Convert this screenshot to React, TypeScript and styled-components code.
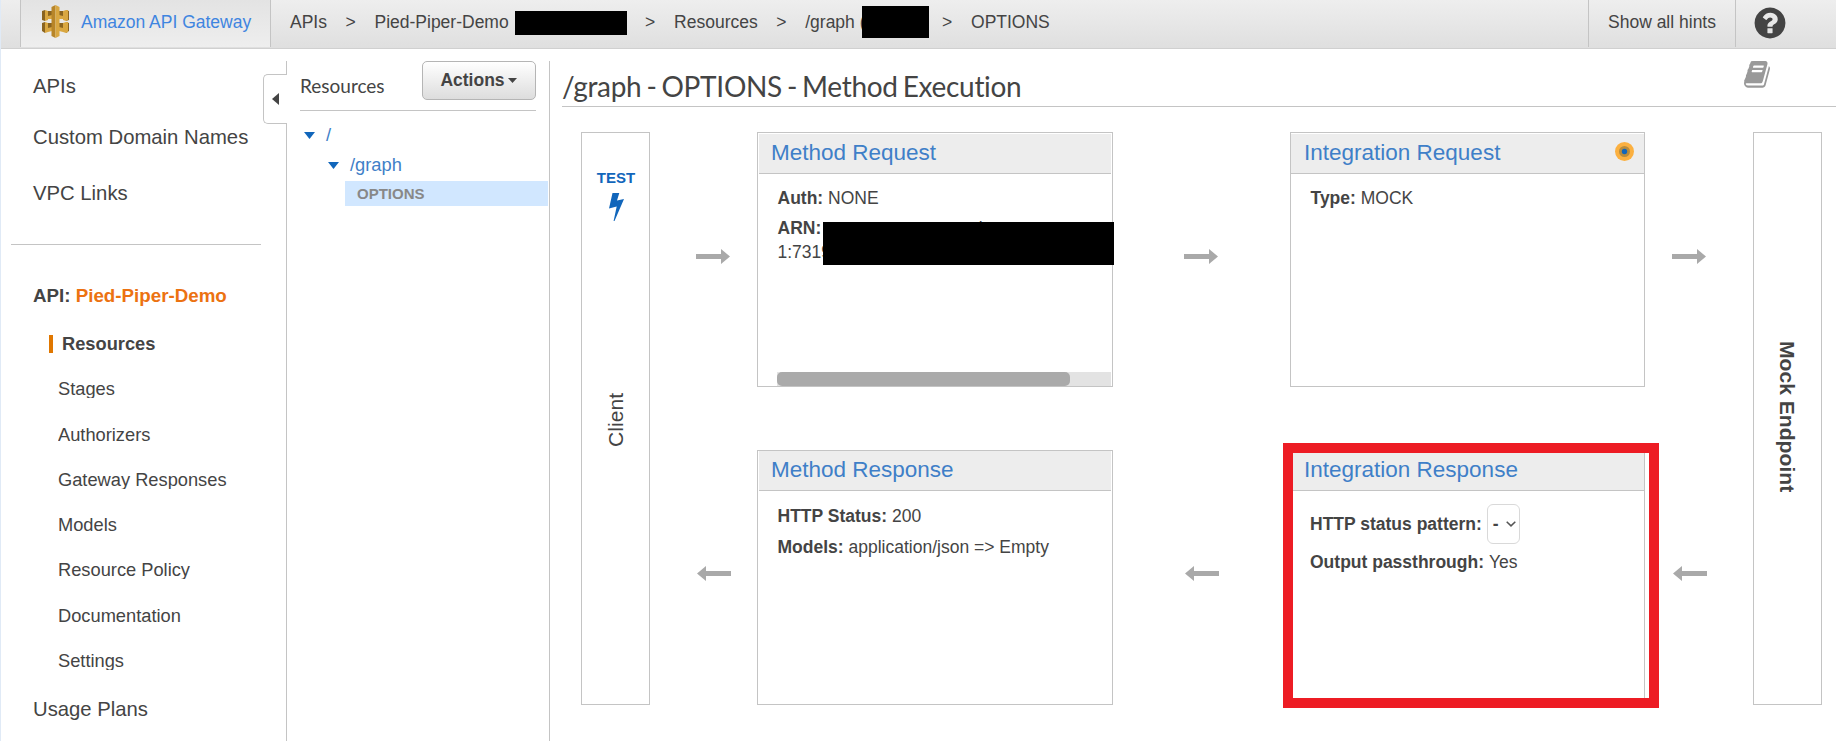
import React from "react";
import styled, { createGlobalStyle } from "styled-components";

const GlobalStyle = createGlobalStyle`
  * { box-sizing: border-box; }
  body {
    margin: 0;
    overflow: hidden;
    background: #fff;
    color: #444;
    font-family: "Liberation Sans", Arial, sans-serif;
    font-size: 17.5px;
  }
`;

const Page = styled.div`
  display: flex;
  flex-direction: column;
  width: 1836px;
  height: 741px;
  overflow: hidden;
  border-left: 1px solid #e0eaf6;
`;

const TopBar = styled.header`
  display: flex;
  flex: none;
  height: 49px;
  padding-left: 19px;
  line-height: 44px;
  background: linear-gradient(#eee, #dfdfdf);
  border-bottom: 1px solid #d0d0d0;
  white-space: pre;
`;

const Brand = styled.a`
  display: flex;
  width: 251px;
  height: 47px;
  padding-left: 21px;
  color: #3f85e0;
  background: linear-gradient(#e3e3e3, #eee);
  border: solid #c4c4c4;
  border-width: 0 1px;
  svg { margin: 5px 12px 0 0; flex: none; }
`;

const Crumbs = styled.nav`
  display: flex;
  flex: 1;
  padding-left: 19px;
`;

const Chevron = styled.span<{ $before?: number }>`
  width: 10px;
  margin: 0 19px 0 ${(p) => p.$before ?? 18.5}px;
`;

const Redaction = styled.span<{ $w: number; $h: number; $top: number; $left: number }>`
  width: ${(p) => p.$w}px;
  height: ${(p) => p.$h}px;
  margin: ${(p) => p.$top}px 0 0 ${(p) => p.$left}px;
  background: #000;
`;

const TopAction = styled.div<{ $w: number; $pad: number }>`
  width: ${(p) => p.$w}px;
  height: 47px;
  padding-left: ${(p) => p.$pad}px;
  border-left: 1px solid #c4c4c4;
  svg { display: block; margin-top: 5px; }
`;

const Main = styled.div`
  display: flex;
  flex: 1;
  min-height: 0;
`;

const Sidebar = styled.aside`
  position: relative;
  flex: none;
  width: 286px;
  height: 680px;
  margin-top: 12px;
  border-right: 1px solid #c4c4c4;
`;

const NavLink = styled.a<{ $top: number }>`
  display: block;
  height: 24px;
  margin: ${(p) => p.$top}px 0 0 32px;
  font-size: 20.3px;
  line-height: 24px;
`;

const Divider = styled.hr`
  width: 250px;
  height: 1px;
  margin: 39px 0 0 10px;
  border: 0;
  background: #c4c4c4;
`;

const ApiTitle = styled.h3`
  height: 22px;
  margin: 40px 0 0 32px;
  font-size: 18.75px;
  line-height: 22px;
  em { color: #ec7211; font-style: normal; }
`;

const SubList = styled.ul`
  display: flex;
  flex-direction: column;
  gap: 27.25px;
  margin: 28px 0 0;
  padding: 0 0 0 57px;
  list-style: none;
`;

const SubItem = styled.li<{ $active?: boolean }>`
  height: 18px;
  overflow: hidden;
  font-size: 18.28px;
  line-height: 17px;
  margin-left: ${(p) => (p.$active ? -9 : 0)}px;
  padding-left: ${(p) => (p.$active ? 9 : 0)}px;
  border-left: ${(p) => (p.$active ? "4px solid #e07700" : "0")};
  font-weight: ${(p) => (p.$active ? 700 : 400)};
`;

const CollapseTab = styled.button`
  position: absolute;
  top: 13px;
  right: -1px;
  width: 24px;
  height: 50px;
  padding: 0 0 0 8px;
  background: #fff;
  border: 1px solid #c4c4c4;
  border-right: 0;
  border-radius: 5px 0 0 5px;
  svg { display: block; }
`;

const ResourcePane = styled.section`
  flex: none;
  width: 263px;
  height: 680px;
  margin-top: 12px;
  padding: 0 1px 0 13px;
  border-right: 1px solid #c4c4c4;
`;

const PaneHeader = styled.div`
  display: flex;
  justify-content: space-between;
  width: 236px;
  height: 50px;
  border-bottom: 1px solid #c4c4c4;
  font-family: Lato, sans-serif;
  font-size: 19px;
  line-height: 50px;
`;

const ActionsButton = styled.button`
  display: flex;
  align-items: center;
  justify-content: center;
  gap: 3px;
  width: 114px;
  height: 39px;
  padding: 0 1px 1px 0;
  color: #444;
  background: linear-gradient(#fff, #ddd);
  border: 1px solid #b5b5b5;
  border-radius: 5px;
  font: bold 17.5px "Liberation Sans", Arial, sans-serif;
`;

const TreeNode = styled.div<{ $level: number; $h: number; $top: number }>`
  display: flex;
  align-items: center;
  gap: 11.5px;
  height: ${(p) => p.$h}px;
  margin-top: ${(p) => p.$top}px;
  padding-left: ${(p) => 3.5 + p.$level * 24}px;
  color: #3f7fc8;
  font-size: 18.3px;
`;

const MethodRow = styled.div`
  height: 25px;
  margin: 6px 0 0 45px;
  padding-left: 12px;
  background: #d1e7ff;
  color: #888;
  font-size: 15px;
  font-weight: 700;
  line-height: 25px;
`;

const Content = styled.main`
  flex: 1;
  margin-left: 12px;
`;

const TitleBar = styled.div`
  display: flex;
  justify-content: space-between;
  height: 58px;
  padding: 0 65px 0 0;
  border-bottom: 1px solid #c4c4c4;
  svg { margin-top: 11.5px; }
`;

const Title = styled.h1`
  margin: 8px 0 0;
  font: 400 28px/59px Lato, sans-serif;
  height: 49px;
  letter-spacing: -0.3px;
  word-spacing: -1.9px;
  white-space: nowrap;
`;

const Diagram = styled.div`
  display: flex;
  height: 573px;
  margin: 25px 0 0 19px;
`;

const EndBox = styled.div<{ $client?: boolean }>`
  display: flex;
  flex-direction: column;
  align-items: center;
  flex: none;
  width: 69px;
  height: 573px;
  border: 1px solid #c4c4c4;
  padding: ${(p) => (p.$client ? "36px 0 0 1px" : "208px 1px 0 0")};
`;

const TestLink = styled.a`
  display: flex;
  flex-direction: column;
  align-items: center;
  gap: 7px;
  height: 224px;
  color: #1166bb;
  font-size: 15px;
  font-weight: 700;
  line-height: 17px;
`;

const VerticalText = styled.span<{ $up?: boolean }>`
  writing-mode: vertical-rl;
  transform: ${(p) => (p.$up ? "rotate(180deg)" : "none")};
  font-size: 21.1px;
  font-weight: ${(p) => (p.$up ? 400 : 700)};
  line-height: 24px;
  white-space: nowrap;
`;

const Lane = styled.div<{ $w: number; $pad: number }>`
  display: flex;
  flex-direction: column;
  gap: 302px;
  flex: none;
  width: ${(p) => p.$w}px;
  padding: 117px 0 0 ${(p) => p.$pad}px;
  svg { display: block; flex: none; }
  svg + svg { margin-left: 1px; }
`;

const Stack = styled.div<{ $w: number }>`
  display: flex;
  flex-direction: column;
  justify-content: space-between;
  flex: none;
  width: ${(p) => p.$w}px;
`;

const Card = styled.section`
  position: relative;
  height: 255px;
  border: 1px solid #c4c4c4;
`;

const CardHeader = styled.h2<{ $inset?: boolean; $second?: boolean }>`
  display: flex;
  justify-content: space-between;
  height: 40px;
  margin: ${(p) => (p.$second ? 0 : 1)}px ${(p) => (p.$inset ? 1 : 0)}px 0;
  padding: 0 10px 0 ${(p) => (p.$inset ? 12 : 13)}px;
  background: #ededed;
  border-bottom: 1px solid #c4c4c4;
  color: #3f7fc8;
  font-size: 22.5px;
  font-weight: 400;
  line-height: 38px;
  svg { margin-top: 8px; }
`;

const Field = styled.p<{ $top: number; $x?: number }>`
  display: flex;
  align-items: center;
  height: 20px;
  margin: ${(p) => p.$top}px 0 0 ${(p) => p.$x ?? 19.5}px;
  line-height: 20px;
  white-space: pre;
`;

const ArnMask = styled.div`
  position: absolute;
  left: 65px;
  top: 89px;
  width: 291px;
  height: 43px;
  background: #000;
`;

const ScrollTrack = styled.div`
  position: absolute;
  left: 19px;
  right: 1px;
  bottom: 0;
  height: 14px;
  background: #e3e3e3;
`;

const ScrollThumb = styled.div`
  width: 293px;
  height: 14px;
  border-radius: 5px;
  background: #aaa;
`;

const StatusSelect = styled.span`
  display: flex;
  align-items: center;
  justify-content: space-between;
  width: 33px;
  height: 40px;
  margin-left: 5px;
  padding: 0 3px 0 5px;
  border: 1px solid #d9d9d9;
  border-radius: 6px;
  font-weight: 700;
`;

const Highlight = styled.div`
  position: absolute;
  left: -8px;
  top: -8px;
  width: 376px;
  height: 265px;
  border: 10px solid #ed1c24;
`;

const ApiGatewayLogo = () => (
  <svg width="27" height="33" viewBox="0 0 27 33">
    <path fill="#8a6420" d="M0 6l3-1v11l-3-1zM0 18l3-1v11l-3-2zM24 5l3 1v9l-3 1zM24 17l3 1v8l-3 2z" />
    <path fill="#8a6420" d="M6 6h4v5H6zM6 18h4v5H6zM17 6h4v5h-4zM17 18h4v5h-4z" />
    <path fill="#d9a741" d="M3 5l3 1v9l-3 1zM3 17l3 1v9l-3 1zM21 6l3-1h2v10l-2 1-3-1zM21 18l3-1h2v10l-2 1-3-1z" />
    <path fill="#d9a741" d="M6 11l4-1v4H6zM6 23l4-1v4l-4 1zM17 10l4 1v3h-4zM17 22l4 1v4l-4-1z" />
    <path fill="#b88528" d="M9.500 2l4-2v33l-4-2z" />
    <path fill="#d9a741" d="M13.500 0l4 2v29l-4 2z" />
  </svg>
);

const HelpIcon = () => (
  <svg width="36" height="36" viewBox="0 0 1792 1792" fill="#444">
    <path d="M1024 1376v-192q0-14-9-23t-23-9h-192q-14 0-23 9t-9 23v192q0 14 9 23t23 9h192q14 0 23-9t9-23zM1280 704q0-88-55.5-163t-138.5-116-170-41q-243 0-371 213-15 24 8 42l132 100q7 6 19 6 16 0 25-12 53-68 86-92 34-24 86-24 48 0 85.5 26t37.5 59q0 38-20 61t-68 45q-63 28-115.5 86.5t-52.5 125.5v36q0 14 9 23t23 9h192q14 0 23-9t9-23q0-19 21.5-49.5t54.5-49.5q32-18 49-28.5t46-35 44.5-48 28-60.5 12.5-81zM1664 896q0 209-103 385.5t-279.5 279.5-385.5 103-385.5-103-279.5-279.5-103-385.5 103-385.5 279.5-279.5 385.5-103 385.5 103 279.5 279.5 103 385.5z" />
  </svg>
);

const BookIcon = () => (
  <svg width="28" height="29" viewBox="0 128 1792 1664" preserveAspectRatio="none" fill="#999">
    <path d="M1703 478q40 57 18 129l-275 906q-19 64-76.5 107.5t-122.5 43.5h-923q-77 0-148.5-53.5t-99.5-131.5q-24-67-2-127 0-4 3-27t4-37q1-8-3-21.5t-3-19.5q2-11 8-21t16.5-23.5 16.5-23.5q23-38 45-91.5t30-91.5q3-10 .5-30t-.5-28q3-11 17-28t17-23q21-36 42-92t25-90q1-9-2.5-32t.5-28q4-13 22-30.5t22-22.5q19-26 42.5-84.5t27.5-96.5q1-8-3-25.5t-2-26.5q2-8 9-18t18-23 17-21q8-12 16.5-30.5t15-35 16-36 19.5-32 26.5-23.5 36-11.5 47.5 5.5l-1 3q38-9 51-9h761q74 0 114 56t18 130l-274 906q-36 119-71.5 153.5t-128.5 34.5h-869q-27 0-38 15-11 16-1 43 24 70 144 70h923q29 0 56-15.5t35-41.5l300-987q7-22 5-57 38 15 59 43zm-1064 2q-4 13 2 22.5t20 9.5h608q13 0 25.5-9.5t16.5-22.5l21-64q4-13-2-22.5t-20-9.5h-608q-13 0-25.5 9.5t-16.5 22.5zm-83 256q-4 13 2 22.5t20 9.5h608q13 0 25.5-9.5t16.5-22.5l21-64q4-13-2-22.5t-20-9.5h-608q-13 0-25.5 9.5t-16.5 22.5z" />
  </svg>
);

const BoltIcon = () => (
  <svg width="15" height="28" viewBox="0 0 15 28" fill="#1166bb">
    <path d="M3.500 0H10.300L8 7.500 15 6 5.500 28H4.600L7.700 13.500 0 15.500z" />
  </svg>
);

const Caret = () => (
  <svg width="11" height="7" viewBox="0 0 11 7" fill="#1166bb">
    <path d="M0 0h11L5.500 7z" />
  </svg>
);

const ArrowRight = () => (
  <svg width="34" height="15" viewBox="0 0 34 15" fill="#a9a9a9">
    <path d="M0 5h25V0l9 7.500-9 7.500v-5H0z" />
  </svg>
);

const ArrowLeft = () => (
  <svg width="34" height="15" viewBox="0 0 34 15" fill="#a9a9a9">
    <path d="M34 5H9V0L0 7.500 9 15v-5h25z" />
  </svg>
);

const TargetIcon = () => (
  <svg width="19" height="19" viewBox="0 0 19 19">
    <circle cx="9.5" cy="9.5" r="9.5" fill="#fbb040" />
    <circle cx="9.5" cy="9.5" r="5.5" fill="#b98c3c" />
    <circle cx="9.5" cy="9.5" r="2.7" fill="#1166bb" />
  </svg>
);

const subItems = ["Resources", "Stages", "Authorizers", "Gateway Responses", "Models", "Resource Policy", "Documentation", "Settings"];

export default function App() {
  return (
    <Page>
      <GlobalStyle />
      <TopBar>
        <Brand>
          <ApiGatewayLogo />
          <span>Amazon API Gateway</span>
        </Brand>
        <Crumbs>
          <span>APIs</span>
          <Chevron>&gt;</Chevron>
          <span>Pied-Piper-Demo </span>
          <Redaction $w={112} $h={24} $top={11} $left={1} />
          <Chevron>&gt;</Chevron>
          <span>Resources</span>
          <Chevron>&gt;</Chevron>
          <span>/graph (</span>
          <Redaction $w={67} $h={32} $top={6} $left={-3.5} />
          <Chevron $before={13}>&gt;</Chevron>
          <span>OPTIONS</span>
        </Crumbs>
        <TopAction $w={147} $pad={19}>Show all hints</TopAction>
        <TopAction $w={101} $pad={16}><HelpIcon /></TopAction>
      </TopBar>
      <Main>
        <Sidebar>
          <NavLink $top={13}>APIs</NavLink>
          <NavLink $top={27}>Custom Domain Names</NavLink>
          <NavLink $top={32}>VPC Links</NavLink>
          <Divider />
          <ApiTitle>API: <em>Pied-Piper-Demo</em></ApiTitle>
          <SubList>
            {subItems.map((name, i) => (
              <SubItem key={name} $active={i === 0}>{name}</SubItem>
            ))}
          </SubList>
          <NavLink $top={27}>Usage Plans</NavLink>
          <CollapseTab aria-label="Collapse">
            <svg width="7" height="12" viewBox="0 0 7 12" fill="#444"><path d="M7 0v12L0 6z" /></svg>
          </CollapseTab>
        </Sidebar>
        <ResourcePane>
          <PaneHeader>
            <span>Resources</span>
            <ActionsButton>
              Actions
              <svg width="9" height="5" viewBox="0 0 9 5" fill="#444"><path d="M0 0h9L4.500 5z" /></svg>
            </ActionsButton>
          </PaneHeader>
          <TreeNode $level={0} $h={20} $top={14}><Caret /><span>/</span></TreeNode>
          <TreeNode $level={1} $h={20} $top={10}><Caret /><span>/graph</span></TreeNode>
          <MethodRow>OPTIONS</MethodRow>
        </ResourcePane>
        <Content>
          <TitleBar>
            <Title>/graph - OPTIONS - Method Execution</Title>
            <BookIcon />
          </TitleBar>
          <Diagram>
            <EndBox $client>
              <TestLink>TEST<BoltIcon /></TestLink>
              <VerticalText $up>Client</VerticalText>
            </EndBox>
            <Lane $w={107} $pad={45.5}><ArrowRight /><ArrowLeft /></Lane>
            <Stack $w={356}>
              <Card>
                <CardHeader $inset>Method Request</CardHeader>
                <Field $top={14}><b>Auth: </b>NONE</Field>
                <Field $top={10}><b>ARN: </b>arn:aws:execute-api:us-east-</Field>
                <Field $top={4}>1:7319</Field>
                <ArnMask />
                <ScrollTrack><ScrollThumb /></ScrollTrack>
              </Card>
              <Card>
                <CardHeader $inset $second>Method Response</CardHeader>
                <Field $top={15}><b>HTTP Status: </b>200</Field>
                <Field $top={11}><b>Models: </b>application/json =&gt; Empty</Field>
              </Card>
            </Stack>
            <Lane $w={177} $pad={70.5}><ArrowRight /><ArrowLeft /></Lane>
            <Stack $w={355}>
              <Card>
                <CardHeader>Integration Request<TargetIcon /></CardHeader>
                <Field $top={14}><b>Type: </b>MOCK</Field>
              </Card>
              <Card>
                <CardHeader $second>Integration Response</CardHeader>
                <Field $top={23} $x={19}>
                  <b>HTTP status pattern:</b>
                  <StatusSelect>
                    -
                    <svg width="10" height="6" viewBox="0 0 10 6" fill="none" stroke="#555" strokeWidth="1.5"><path d="M.7.8L5 4.900 9.300.8" /></svg>
                  </StatusSelect>
                </Field>
                <Field $top={18} $x={19}><b>Output passthrough: </b>Yes</Field>
                <Highlight />
              </Card>
            </Stack>
            <Lane $w={108} $pad={27}><ArrowRight /><ArrowLeft /></Lane>
            <EndBox>
              <VerticalText>Mock Endpoint</VerticalText>
            </EndBox>
          </Diagram>
        </Content>
      </Main>
    </Page>
  );
}
